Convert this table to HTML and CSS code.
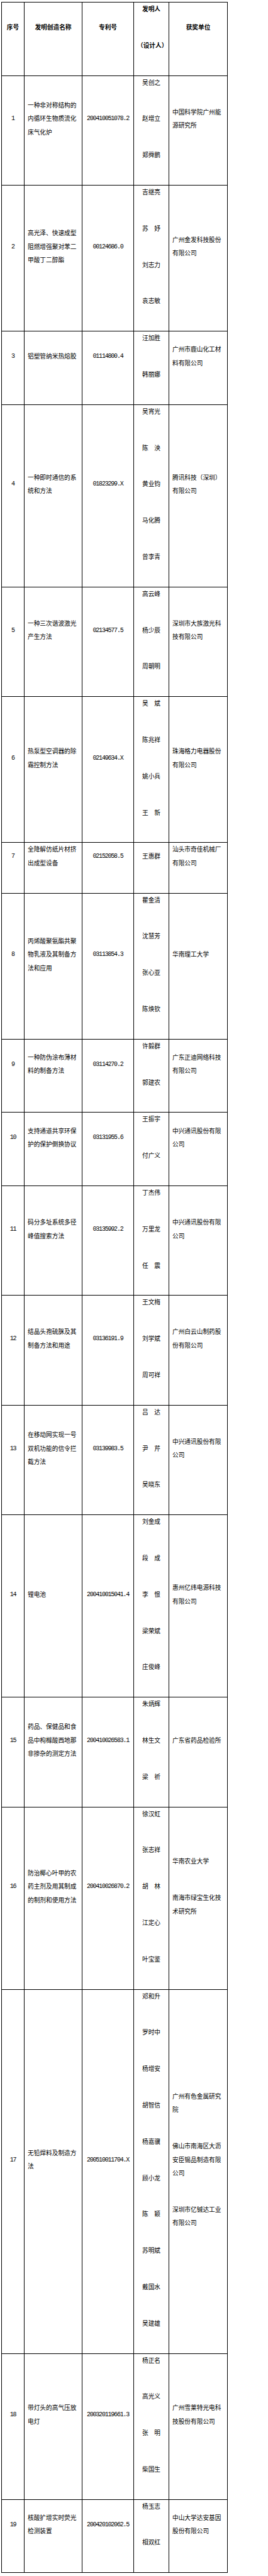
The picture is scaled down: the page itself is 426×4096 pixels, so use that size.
FILE: index.html
```html
<!DOCTYPE html>
<html lang="zh-CN">
<head>
<meta charset="utf-8">
<title>专利奖名单</title>
<link rel="stylesheet" href="styles.css">
</head>
<body>
<table class="grid">
<colgroup>
<col class="c-no"><col class="c-name"><col class="c-pat"><col class="c-inv"><col class="c-unit">
</colgroup>
<thead>
<tr class="head">
<th class="no"><p>序号</p></th>
<th class="ctr"><p>发明创造名称</p></th>
<th class="ctr"><p>专利号</p></th>
<th class="ctr"><p>发明人</p><p>（设计人）</p></th>
<th class="ctr"><p>获奖单位</p></th>
</tr>
</thead>
<tbody>
<tr>
<td class="num"><p>1</p></td>
<td class="txt"><p>一种非对称结构的内循环生物质流化床气化炉</p></td>
<td class="num"><p>200410051078.2</p></td>
<td class="inv"><p>吴创之</p><p>赵增立</p><p>郑舜鹏</p></td>
<td class="txt"><p>中国科学院广州能源研究所</p></td>
</tr>
<tr>
<td class="num"><p>2</p></td>
<td class="txt"><p>高光泽、快速成型阻燃增强聚对苯二甲酸丁二醇酯</p></td>
<td class="num"><p>00124686.0</p></td>
<td class="inv"><p>吉继亮</p><p>苏　妤</p><p>刘志力</p><p>袁志敏</p></td>
<td class="txt"><p>广州金发科技股份有限公司</p></td>
</tr>
<tr>
<td class="num"><p>3</p></td>
<td class="txt"><p>铝塑管纳米热熔胶</p></td>
<td class="num"><p>01114800.4</p></td>
<td class="inv"><p>汪加胜</p><p>韩丽娜</p></td>
<td class="txt"><p>广州市鹿山化工材料有限公司</p></td>
</tr>
<tr>
<td class="num"><p>4</p></td>
<td class="txt"><p>一种即时通信的系统和方法</p></td>
<td class="num"><p>01823299.X</p></td>
<td class="inv"><p>吴宵光</p><p>陈　泱</p><p>黄业钧</p><p>马化腾</p><p>曾李青</p></td>
<td class="txt"><p>腾讯科技（深圳）有限公司</p></td>
</tr>
<tr>
<td class="num"><p>5</p></td>
<td class="txt"><p>一种三次谐波激光产生方法</p></td>
<td class="num"><p>02134577.5</p></td>
<td class="inv"><p>高云峰</p><p>杨少辰</p><p>周朝明</p></td>
<td class="txt"><p>深圳市大族激光科技有限公司</p></td>
</tr>
<tr>
<td class="num"><p>6</p></td>
<td class="txt"><p>热泵型空调器的除霜控制方法</p></td>
<td class="num"><p>02149634.X</p></td>
<td class="inv"><p>吴　斌</p><p>陈兆祥</p><p>姚小兵</p><p>王　新</p></td>
<td class="txt"><p>珠海格力电器股份有限公司</p></td>
</tr>
<tr>
<td class="num"><p>7</p></td>
<td class="txt"><p>全降解仿纸片材挤出成型设备</p></td>
<td class="num"><p>02152058.5</p></td>
<td class="inv"><p>王惠群</p></td>
<td class="txt"><p>汕头市奇佳机械厂有限公司</p></td>
</tr>
<tr>
<td class="num"><p>8</p></td>
<td class="txt"><p>丙烯酸聚氨酯共聚物乳液及其制备方法和应用</p></td>
<td class="num"><p>03113854.3</p></td>
<td class="inv"><p>瞿金清</p><p>沈慧芳</p><p>张心亚</p><p>陈焕钦</p></td>
<td class="txt"><p>华南理工大学</p></td>
</tr>
<tr>
<td class="num"><p>9</p></td>
<td class="txt"><p>一种防伪涂布薄材料的制备方法</p></td>
<td class="num"><p>03114270.2</p></td>
<td class="inv"><p>许毅群</p><p>郭建农</p></td>
<td class="txt"><p>广东正迪网络科技有限公司</p></td>
</tr>
<tr>
<td class="num"><p>10</p></td>
<td class="txt"><p>支持通道共享环保护的保护倒换协议</p></td>
<td class="num"><p>03131955.6</p></td>
<td class="inv"><p>王振宇</p><p>付广义</p></td>
<td class="txt"><p>中兴通讯股份有限公司</p></td>
</tr>
<tr>
<td class="num"><p>11</p></td>
<td class="txt"><p>码分多址系统多径峰值搜索方法</p></td>
<td class="num"><p>03135992.2</p></td>
<td class="inv"><p>丁杰伟</p><p>万里龙</p><p>任　震</p></td>
<td class="txt"><p>中兴通讯股份有限公司</p></td>
</tr>
<tr>
<td class="num"><p>12</p></td>
<td class="txt"><p>结晶头孢硫脒及其制备方法和用途</p></td>
<td class="num"><p>03136191.9</p></td>
<td class="inv"><p>王文梅</p><p>刘学斌</p><p>周可祥</p></td>
<td class="txt"><p>广州白云山制药股份有限公司</p></td>
</tr>
<tr>
<td class="num"><p>13</p></td>
<td class="txt"><p>在移动网实现一号双机功能的信令拦截方法</p></td>
<td class="num"><p>03139983.5</p></td>
<td class="inv"><p>吕　达</p><p>尹　芹</p><p>吴晓东</p></td>
<td class="txt"><p>中兴通讯股份有限公司</p></td>
</tr>
<tr>
<td class="num"><p>14</p></td>
<td class="txt"><p>锂电池</p></td>
<td class="num"><p>200410015041.4</p></td>
<td class="inv"><p>刘金成</p><p>段　成</p><p>李　憬</p><p>梁荣斌</p><p>庄俊峰</p></td>
<td class="txt"><p>惠州亿纬电源科技有限公司</p></td>
</tr>
<tr>
<td class="num"><p>15</p></td>
<td class="txt"><p>药品、保健品和食品中枸橼酸西地那非掺杂的测定方法</p></td>
<td class="num"><p>200410026583.1</p></td>
<td class="inv"><p>朱炳辉</p><p>林生文</p><p>梁　祈</p></td>
<td class="txt"><p>广东省药品检验所</p></td>
</tr>
<tr>
<td class="num"><p>16</p></td>
<td class="txt"><p>防治椰心叶甲的农药主剂及用其制成的制剂和使用方法</p></td>
<td class="num"><p>200410026870.2</p></td>
<td class="inv"><p>徐汉虹</p><p>张志祥</p><p>胡　林</p><p>江定心</p><p>叶宝鉴</p></td>
<td class="txt"><p>华南农业大学</p><p>南海市绿宝生化技术研究所</p></td>
</tr>
<tr>
<td class="num"><p>17</p></td>
<td class="txt"><p>无铅焊料及制造方法</p></td>
<td class="num"><p>200510011704.X</p></td>
<td class="inv"><p>邓和升</p><p>罗时中</p><p>杨增安</p><p>胡智信</p><p>杨嘉骥</p><p>顾小龙</p><p>陈　颖</p><p>苏明斌</p><p>戴国水</p><p>吴建雄</p></td>
<td class="txt"><p>广州有色金属研究院</p><p>佛山市南海区大沥安臣锡品制造有限公司</p><p>深圳市亿铖达工业有限公司</p></td>
</tr>
<tr>
<td class="num"><p>18</p></td>
<td class="txt"><p>带灯头的高气压放电灯</p></td>
<td class="num"><p>200320119661.3</p></td>
<td class="inv"><p>杨正名</p><p>高光义</p><p>张　明</p><p>柴国生</p></td>
<td class="txt"><p>广州雪莱特光电科技股份有限公司</p></td>
</tr>
<tr>
<td class="num"><p>19</p></td>
<td class="txt"><p>核酸扩增实时荧光检测装置</p></td>
<td class="num"><p>200420102062.5</p></td>
<td class="inv"><p>杨玉志</p><p>相双红</p></td>
<td class="txt"><p>中山大学达安基因股份有限公司</p></td>
</tr>
</tbody>
</table>
</body>
</html>
```

FILE: styles.css
```css
html, body {
  margin: 0;
  padding: 0;
  background: #ffffff;
}

body {
  font-family: "Noto Sans CJK SC", "Noto Sans", sans-serif;
  font-size: 9.7px;
  color: #000000;
}

.grid {
  border-collapse: collapse;
  table-layout: fixed;
  width: 359px;
  margin: 3px 0 0 2px;
}

.c-no { width: 36px; }
.c-name { width: 92px; }
.c-pat { width: 82px; }
.c-inv { width: 56px; }
.c-unit { width: 93px; }

.grid th,
.grid td {
  border: 1px solid #000000;
  padding: 0 5px;
  vertical-align: middle;
}

.grid p {
  margin: 0 0 36.3px;
  line-height: 21.5px;
}

.head th {
  font-weight: 700;
  text-align: center;
}

.num {
  text-align: center;
  font-family: "Liberation Mono", "DejaVu Sans Mono", monospace;
  font-size: 10px;
  letter-spacing: -1.2px;
}

.txt {
  text-align: left;
  word-break: break-all;
}

.inv {
  text-align: center;
}
```
